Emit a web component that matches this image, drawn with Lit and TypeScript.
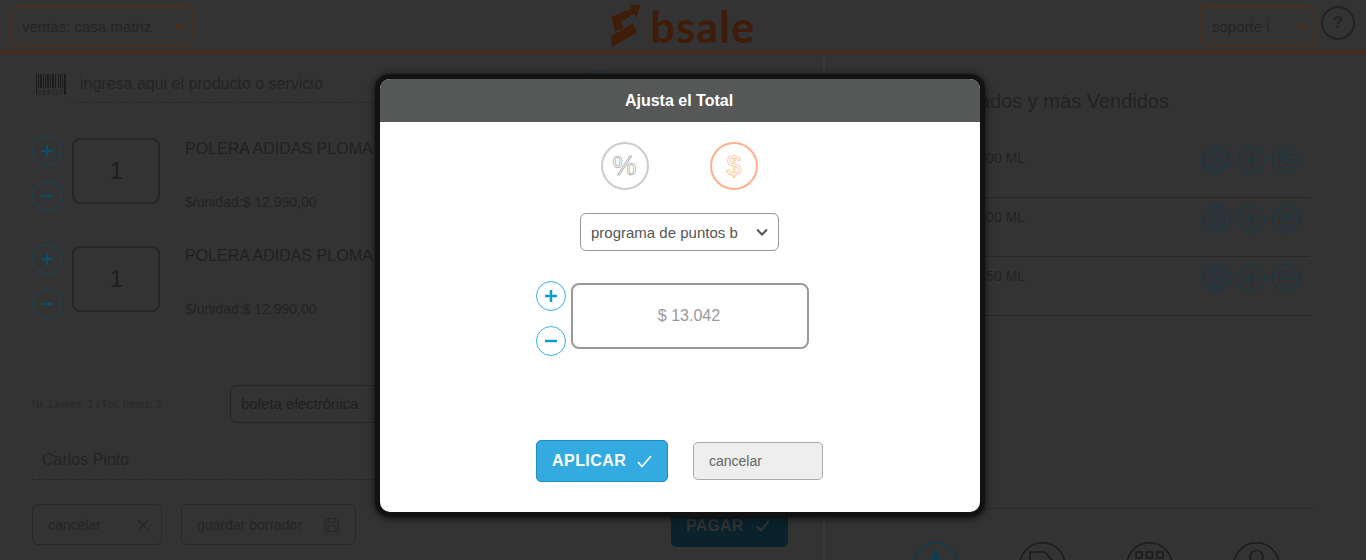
import { LitElement, html, css, svg } from "lit";
import { customElement } from "lit/decorators.js";

const chevron = (color: string) => html`<svg class="chev" width="14" height="9" viewBox="0 0 14 9" fill="none"><path d="M2 1.5 7 6.5 12 1.5" stroke=${color} stroke-width="2"/></svg>`;
const plus = svg`<path d="M9 15H21M15 9V21" stroke="currentColor" stroke-width="2.4"/>`;
const minus = svg`<path d="M9 15H21" stroke="currentColor" stroke-width="2.4"/>`;
const roundBtn = (p: unknown) => html`<svg class="round" width="30" height="30" viewBox="0 0 30 30" fill="none"><circle cx="15" cy="15" r="14.5" stroke="currentColor" stroke-opacity=".75"/>${p}</svg>`;

@customElement("app-root")
export class AppRoot extends LitElement {
  static styles = css`
    :host { display: block; width: 1366px; height: 560px; position: relative; overflow: hidden; background: #333; font-family: "Liberation Sans", Arial, sans-serif; color: #222; }
    * { box-sizing: border-box; }
    .topbar { height: 54px; border-bottom: 4px solid #452c1d; padding: 6px 10px 0; display: grid; grid-template-columns: 1fr auto 1fr; }
    .sel { height: 40px; border: 2px solid #4a2f1f; border-radius: 6px; display: flex; align-items: center; justify-content: space-between; padding: 0 5px 0 10px; font-size: 15px; color: #242424; }
    .sel.branch { width: 183px; }
    .sel.user { width: 116px; padding-left: 11px; }
    .logo { display: flex; align-items: flex-start; gap: 10px; margin: -2px 0 0 0; }
    .logo-text { font-family: Lato, sans-serif; font-weight: 700; font-size: 43px; line-height: 44px; color: #3f1c08; letter-spacing: 1.2px; margin-top: 1px; }
    .top-right { display: flex; justify-content: flex-end; gap: 6px; padding-right: 1px; }
    .help { width: 34px; height: 34px; border: 2px solid #222; border-radius: 50%; display: flex; align-items: center; justify-content: center; font-weight: 700; font-size: 16px; color: #222; }
    .content { display: flex; height: 506px; }
    .left { width: 825px; border-right: 2px solid #3a3a3a; padding: 16px 0 0 32px; flex: none; }
    .search { display: flex; height: 33px; width: 766px; align-items: flex-start; gap: 13px; margin-left: 3px; }
    .barcode { margin-top: 4px; flex: none; }
    .search-field { flex: 1; height: 33px; border-bottom: 1px dashed #262626; font-size: 16px; line-height: 28px; color: #232323; margin-left: -10px; padding-left: 10px; display: flex; }
    .search-field .round { color: #0e3f52; margin-left: 260px; }
    .items { margin-top: 33px; }
    .item { display: flex; height: 108px; }
    .item + .item .info { margin-top: -1px; }
    .ctrl { display: flex; flex-direction: column; gap: 15px; width: 30px; color: #0f4d66; }
    .round { display: block; flex: none; }
    .qty { width: 88px; height: 66px; margin: 2px 0 0 10px; border: 2px solid #262626; border-radius: 8px; display: flex; align-items: center; justify-content: center; padding-left: 1px; font-size: 24px; color: #1e1e1e; }
    .info { margin-left: 25px; padding-top: 3px; }
    .title { font-size: 16px; line-height: 20px; color: #202020; }
    .price { margin-top: 33px; font-size: 14px; line-height: 20px; color: #222; }
    .doc { display: flex; align-items: center; margin-top: 33px; height: 38px; }
    .counts { width: 198px; font-size: 10px; font-weight: 700; letter-spacing: .14px; color: #2a2a2a; }
    .doc-sel { width: 300px; height: 38px; border: 1px solid #242424; border-radius: 6px; padding: 0 10px; font-size: 15px; line-height: 36px; color: #1e1e1e; }
    .client { height: 57px; width: 766px; border-bottom: 1px dashed #262626; padding: 27px 0 0 10px; font-size: 16px; line-height: 20px; color: #232323; }
    .actions { display: flex; margin-top: 24px; width: 756px; gap: 19px; align-items: flex-start; }
    .btn { height: 41px; border: 1px solid #282828; border-radius: 6px; display: flex; align-items: center; justify-content: space-between; padding: 0 11px 0 15px; font-size: 14px; color: #242424; }
    .btn.cancel { width: 130px; }
    .btn.draft { width: 175px; padding-right: 15px; }
    .pay { margin-left: auto; width: 117px; height: 40px; margin-top: 3px; background: #0a222c; border-radius: 5px; color: #333; font-weight: 700; font-size: 16px; letter-spacing: .2px; display: flex; align-items: center; gap: 12px; padding: 0 0 2px 15px; }
    .right { flex: 1; display: flex; flex-direction: column; padding-left: 24px; }
    .heading { width: 320px; text-align: right; font-size: 20px; line-height: 24px; margin-top: 35px; color: #222; white-space: nowrap; }
    .list { margin-top: 26px; width: 461px; }
    .row { height: 59px; border-bottom: 1px solid #272727; display: flex; padding-top: 7px; }
    .row-name { width: 176px; padding-top: 2px; text-align: right; font-size: 14px; line-height: 20px; white-space: nowrap; color: #222; }
    .row-icons { margin-left: auto; margin-right: 10px; display: flex; gap: 7px; color: #0d3b4d; }
    .mini { width: 28px; height: 28px; border: 1px solid #0d3b4d; border-radius: 50%; display: flex; align-items: center; justify-content: center; }
    .mini .out { font-family: "Liberation Sans", sans-serif; line-height: 1; font-size: 30px; color: transparent; -webkit-text-stroke: .6px #0d3b4d; }
    .foot { margin-top: auto; width: 466px; height: 52px; border-top: 1px solid #2b2b2b; display: flex; padding: 33px 0 0 63px; gap: 60px; overflow: hidden; flex: none; }
    .foot svg { flex: none; display: block; }

    .modal { position: absolute; left: 380px; top: 79px; width: 600px; height: 433px; background: #fff; border-radius: 10px; box-shadow: 0 0 1px 5px #121212, 0 1px 7px 6px rgba(10,10,10,.7); display: flex; flex-direction: column; }
    .m-head { height: 43px; flex: none; background: #555856; border-radius: 10px 10px 0 0; color: #fff; font-weight: 700; font-size: 16px; display: flex; align-items: center; justify-content: center; padding-right: 2px; }
    .modes { display: flex; justify-content: center; gap: 61px; margin-top: 20px; padding-right: 2px; }
    .mode { width: 48px; height: 48px; border-radius: 50%; border: 2px solid #ccc; display: flex; align-items: center; justify-content: center; }
    .mode.on { border-color: #ffb08a; }
    .mode span { font-family: "Liberation Sans", sans-serif; font-size: 27px; line-height: 1; color: #fff; -webkit-text-stroke: .5px #888; }
    .mode.on span { -webkit-text-stroke: .5px #ff9d6e; padding-left: 1px; }
    .m-sel { align-self: center; margin: 23px 0 0 -1px; width: 199px; height: 38px; border: 1px solid #999; border-radius: 6px; display: flex; align-items: center; justify-content: space-between; padding: 0 9px 0 10px; font-size: 15px; color: #555; white-space: nowrap; }
    .amount { display: flex; margin: 30px 0 0 156px; }
    .amount .ctrl { color: #0a9ad0; }
    .amount .ctrl svg circle { stroke: #36b0e4; stroke-opacity: 1; }
    .amount-box { width: 238px; height: 66px; margin: 2px 0 0 5px; border: 2px solid #999; border-radius: 8px; display: flex; align-items: center; justify-content: center; padding-right: 2px; font-size: 16px; color: #999; }
    .m-actions { display: flex; align-items: center; gap: 25px; margin: 84px 0 0 156px; }
    .apply { width: 132px; height: 42px; background: #33aae0; border: 1px solid #1f8cc4; border-radius: 5px; color: #fff; font-weight: 700; font-size: 16px; letter-spacing: .45px; display: flex; align-items: center; gap: 11px; padding-left: 15px; }
    .m-cancel { width: 130px; height: 38px; background: #eee; border: 1px solid #aaa; border-radius: 5px; color: #666; font-size: 14px; display: flex; align-items: center; padding-left: 15px; }
  `;

  private barcode() {
    const bars = [0,2,4,7,9,11,14,16,19,22,24,26,28];
    const w = [1,1,2,1,1,2,1,2,1,1,1,1,2];
    return html`<svg class="barcode" width="32" height="22" viewBox="0 0 32 22" fill="#1c1c1c">
      ${bars.map((x, i) => svg`<rect x=${x + 1} y="0" width=${w[i]} height=${i === 0 || i === 12 ? 21 : 14}/>`)}
      <text x="3" y="20.5" font-size="6.5" font-family="Liberation Sans" letter-spacing=".6" fill="#1c1c1c">164737</text>
    </svg>`;
  }

  private item() {
    return html`<div class="item">
      <div class="ctrl">${roundBtn(plus)}${roundBtn(minus)}</div>
      <div class="qty">1</div>
      <div class="info">
        <div class="title">POLERA ADIDAS PLOMA</div>
        <div class="price">$/unidad:$ 12.990,00</div>
      </div>
    </div>`;
  }

  private row(name: string) {
    return html`<div class="row">
      <div class="row-name">${name}</div>
      <div class="row-icons">
        <div class="mini"><span class="out">$</span></div>
        <div class="mini"><svg width="18" height="18" viewBox="0 0 18 18" fill="none" stroke="#0d3b4d"><path d="M9 1V17M1 9H17"/></svg></div>
        <div class="mini"><svg width="18" height="18" viewBox="0 0 18 18" fill="none" stroke="#0d3b4d"><path d="M2 3 5.5 1.5 8 3.5 7.5 7 3.5 7.5 2 5.5Z"/><rect x="10.5" y="3.5" width="6" height="5" rx="1"/><rect x="2.5" y="10.5" width="6" height="6" rx="1"/><rect x="10.5" y="10.5" width="6" height="6" rx="1"/></svg></div>
      </div>
    </div>`;
  }

  render() {
    return html`
      <div class="topbar">
        <div><div class="sel branch"><span>ventas: casa matriz</span>${chevron("#4f2d16")}</div></div>
        <div class="logo">
          <svg width="30" height="44" viewBox="340 12 84 128" fill="#3f1c08">
            <path d="M340 50 398 25 392 14 423 15 412 52 405 40 366 64 376 80 350 92Z"/>
            <path d="M340 105 402 68 415 94 340 137Z"/>
          </svg>
          <span class="logo-text">bsale</span>
        </div>
        <div class="top-right">
          <div class="sel user"><span>soporte i.</span>${chevron("#4f2d16")}</div>
          <div class="help">?</div>
        </div>
      </div>
      <div class="content">
        <section class="left">
          <div class="search">
            ${this.barcode()}
            <div class="search-field"><span>ingresa aqui el producto o servicio</span>${roundBtn(plus)}</div>
          </div>
          <div class="items">${this.item()}${this.item()}</div>
          <div class="doc">
            <div class="counts">Nr. Lineas: 2 / Tot. Items: 2</div>
            <div class="doc-sel">boleta electrónica</div>
          </div>
          <div class="client">Carlos Pinto</div>
          <div class="actions">
            <div class="btn cancel"><span>cancelar</span>
              <svg width="14" height="14" viewBox="0 0 14 14" stroke="#262626" stroke-width="1.2"><path d="M2 2 12 12M12 2 2 12"/></svg></div>
            <div class="btn draft"><span>guardar borrador</span>
              <svg width="16" height="16" viewBox="0 0 16 16" fill="none" stroke="#262626" stroke-width="1.2"><path d="M1.5 1.5H11.5L14.5 4.5V14.5H1.5Z"/><path d="M4.5 1.5V5.5H10.5V1.5M4 14.5V9H12V14.5"/></svg></div>
            <div class="pay"><span>PAGAR</span>
              <svg width="14" height="12" viewBox="0 0 14 12" fill="none" stroke="#333" stroke-width="2"><path d="M1 6.5 5 10.5 13 1"/></svg></div>
          </div>
        </section>
        <section class="right">
          <div class="heading">Recomendados y más Vendidos</div>
          <div class="list">
            ${this.row("AGUA MINERAL 500 ML")}
            ${this.row("AGUA MINERAL 600 ML")}
            ${this.row("AGUA MINERAL 350 ML")}
          </div>
          <div class="foot">
            <svg width="47" height="47" viewBox="0 0 47 47" fill="none" stroke="#0e3c4d" stroke-width="1.6"><circle cx="23.5" cy="23.5" r="22.7"/><path d="M23.5 9 31 24H16Z" fill="#0e3c4d"/></svg>
            <svg width="47" height="47" viewBox="0 0 47 47" fill="none" stroke="#1c1c1c" stroke-width="1.6"><circle cx="23.5" cy="23.5" r="22.7"/><path d="M11 10H26L36 22 26 34H11Z"/></svg>
            <svg width="47" height="47" viewBox="0 0 47 47" fill="none" stroke="#1c1c1c" stroke-width="1.6"><circle cx="23.5" cy="23.5" r="22.7"/><rect x="10" y="10" width="6" height="6"/><rect x="20.5" y="10" width="6" height="6"/><rect x="31" y="10" width="6" height="6"/></svg>
            <svg width="47" height="47" viewBox="0 0 47 47" fill="none" stroke="#1c1c1c" stroke-width="1.6"><circle cx="23.5" cy="23.5" r="22.7"/><circle cx="23.5" cy="15" r="6.5"/></svg>
          </div>
        </section>
      </div>

      <div class="modal">
        <div class="m-head">Ajusta el Total</div>
        <div class="modes">
          <div class="mode"><span>%</span></div>
          <div class="mode on"><span>$</span></div>
        </div>
        <div class="m-sel"><span>programa de puntos b</span>${chevron("#555")}</div>
        <div class="amount">
          <div class="ctrl">${roundBtn(plus)}${roundBtn(minus)}</div>
          <div class="amount-box">$ 13.042</div>
        </div>
        <div class="m-actions">
          <div class="apply"><span>APLICAR</span>
            <svg width="15" height="13" viewBox="0 0 15 13" fill="none" stroke="#fff" stroke-width="1.6"><path d="M1 7 5 11.5 14 1"/></svg></div>
          <div class="m-cancel">cancelar</div>
        </div>
      </div>
    `;
  }
}
